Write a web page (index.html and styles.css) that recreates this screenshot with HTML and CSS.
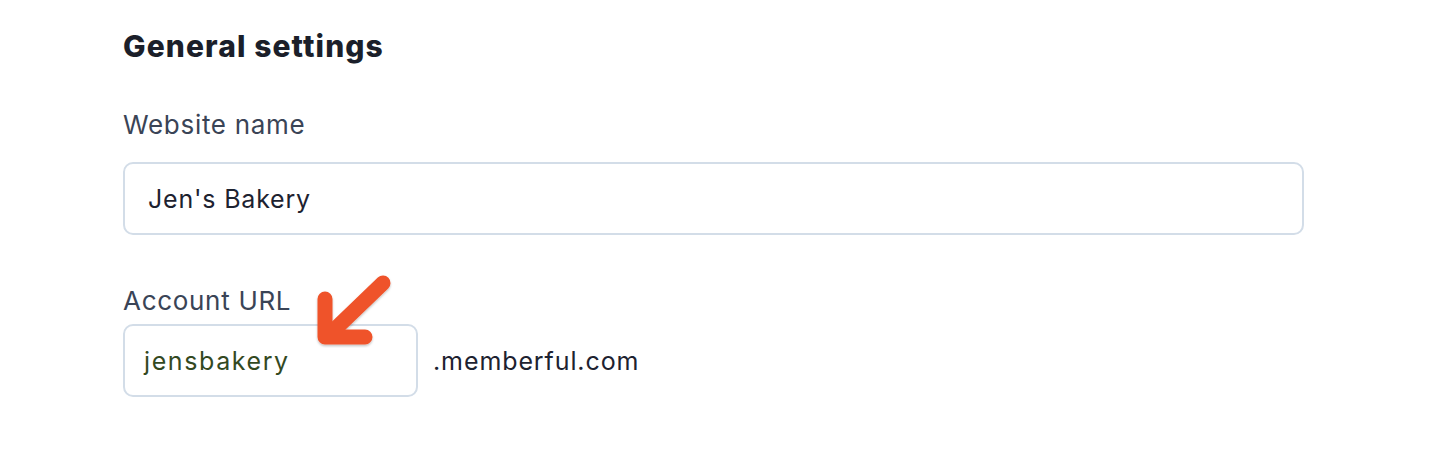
FILE: index.html
```html
<!DOCTYPE html>
<html lang="en">
<head>
<meta charset="utf-8">
<title>General settings</title>
<link rel="stylesheet" href="styles.css">
</head>
<body>
<main class="page">
  <h2 class="title">General settings</h2>
  <div class="field">
    <label class="label" for="site">Website name</label>
    <div class="input input-wide" id="site">Jen's Bakery</div>
  </div>
  <div class="field field-url">
    <label class="label" for="url">Account URL</label>
    <div class="url-row">
      <div class="input input-url" id="url">jensbakery</div>
      <span class="suffix">.memberful.com</span>
    </div>
    <svg class="arrow" width="90" height="80" viewBox="310 270 90 80" aria-hidden="true">
      <defs>
        <filter id="sh" x="-20%" y="-20%" width="140%" height="140%">
          <feDropShadow dx="0" dy="1.5" stdDeviation="1.2" flood-color="#000" flood-opacity="0.25"/>
        </filter>
      </defs>
      <g filter="url(#sh)" fill="none" stroke="#ef532a" stroke-width="15" stroke-linecap="round" stroke-linejoin="round">
        <path d="M383 283 L330 334"/>
        <path d="M325 299 L325 337 L365 337"/>
      </g>
    </svg>
  </div>
</main>
</body>
</html>
```
FILE: styles.css
```css
html, body {
  margin: 0;
  padding: 0;
  background: #ffffff;
}
body {
  font-family: Inter, "Open Sans", "Liberation Sans", sans-serif;
  width: 1440px;
  height: 449px;
  overflow: hidden;
}
.page {
  position: relative;
  padding: 26px 0 0 123px;
}
.title {
  margin: 0;
  font-size: 30px;
  font-weight: 800;
  line-height: 40px;
  letter-spacing: 1.1px;
  color: #1b1f2a;
}
.field {
  display: flex;
  flex-direction: column;
  margin-top: 44px;
}
.field-url {
  margin-top: 51px;
}
.label {
  font-size: 26px;
  line-height: 30px;
  letter-spacing: 0.7px;
  color: #3a4456;
  margin-bottom: 22px;
}
.field-url .label {
  margin-bottom: 8px;
}
.input {
  box-sizing: border-box;
  height: 73px;
  border: 2px solid #d3dde8;
  border-radius: 10px;
  display: flex;
  align-items: center;
  padding-left: 23px;
  font-size: 25px;
  letter-spacing: 0.8px;
  color: #1d2230;
}
.input-wide {
  width: 1181px;
}
.url-row {
  display: flex;
  align-items: center;
  gap: 15px;
}
.input-url {
  width: 295px;
  padding-left: 19px;
  color: #33491f;
  letter-spacing: 1.6px;
}
.suffix {
  font-size: 25px;
  letter-spacing: 0.9px;
  color: #1d2230;
}
.arrow {
  position: absolute;
  left: 310px;
  top: 270px;
}
```
